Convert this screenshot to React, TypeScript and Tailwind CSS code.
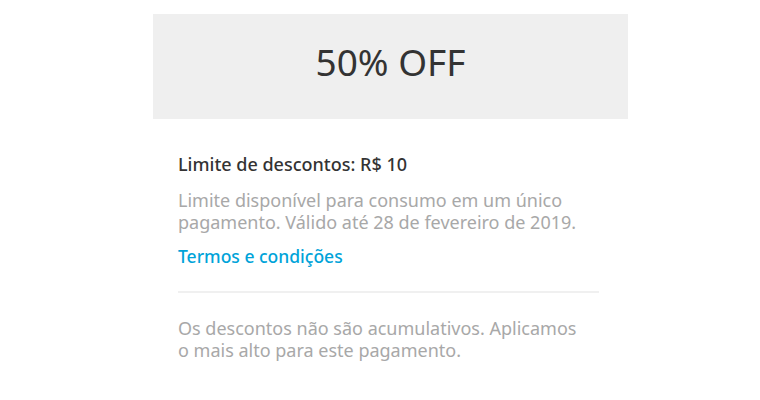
const App = () => {
  return (
    <div className="min-h-[400px] w-full bg-white font-['Noto_Sans','Lato',sans-serif]">
      <div className="ml-[153px] w-[475px] pt-[14px]">
        <div className="flex h-[105px] items-center justify-center bg-[#efefef] pb-[11px]">
          <span className="text-[37px] leading-none text-[#333333]">50% OFF</span>
        </div>
        <div className="pl-[25px] pr-[29px] pt-[33px]">
          <h2 className="text-[18px] leading-[24px] font-medium text-[#333333]">
            Limite de descontos: R$ 10
          </h2>
          <p className="mt-[13px] text-[18px] leading-[22px] text-[#a8a8a8]">
            Limite disponível para consumo em um único pagamento. Válido até 28 de fevereiro de 2019.
          </p>
          <a href="#" className="mt-[11px] block text-[17.5px] leading-[24px] font-medium text-[#00a3d9]">
            Termos e condições
          </a>
          <div className="mt-[23px] h-[2px] w-[421px] bg-[#f0f0f0]" />
          <p className="mt-[24px] w-[410px] text-[18px] leading-[22px] text-[#a8a8a8]">
            Os descontos não são acumulativos. Aplicamos o mais alto para este pagamento.
          </p>
        </div>
      </div>
    </div>
  );
};

export default App;
